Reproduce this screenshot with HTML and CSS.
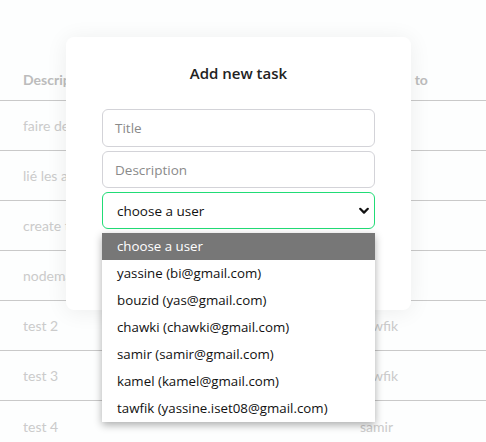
FILE: index.html
```html
<!DOCTYPE html>
<html>
<head>
<meta charset="utf-8">
<link rel="stylesheet" href="styles.css">
</head>
<body>
<div class="page">
  <div class="table">
    <div class="row head"><div class="c1">Description</div><div class="c2">Assigned to</div></div>
    <div class="row"><div class="c1">faire des tests</div><div class="c2">yassine</div></div>
    <div class="row"><div class="c1">lié les apis</div><div class="c2">bouzid</div></div>
    <div class="row"><div class="c1">create task</div><div class="c2">chawki</div></div>
    <div class="row"><div class="c1">nodemailer</div><div class="c2">kamel</div></div>
    <div class="row"><div class="c1">test 2</div><div class="c2">tawfik</div></div>
    <div class="row"><div class="c1">test 3</div><div class="c2">tawfik</div></div>
    <div class="row last"><div class="c1">test 4</div><div class="c2">samir</div></div>
  </div>

  <div class="modal">
    <h2 class="modal-title">Add new task</h2>
    <div class="form">
      <div class="input"><span class="ph">Title</span></div>
      <div class="input"><span class="ph">Description</span></div>
      <div class="select">
        <span>choose a user</span>
        <svg class="chev" width="10" height="8" viewBox="0 0 10 8"><path d="M1.2 1.8 L5 5.6 L8.8 1.8" fill="none" stroke="#111" stroke-width="2.2" stroke-linecap="round" stroke-linejoin="round"/></svg>
      </div>
    </div>
  </div>

  <ul class="options">
    <li class="sel">choose a user</li>
    <li>yassine (bi@gmail.com)</li>
    <li>bouzid (yas@gmail.com)</li>
    <li>chawki (chawki@gmail.com)</li>
    <li>samir (samir@gmail.com)</li>
    <li>kamel (kamel@gmail.com)</li>
    <li>tawfik (yassine.iset08@gmail.com)</li>
  </ul>
</div>
</body>
</html>
```

FILE: styles.css
```css
* { box-sizing: border-box; }
html, body { margin: 0; padding: 0; }
body {
  width: 486px;
  height: 442px;
  overflow: hidden;
  background: #fdfefe;
  font-family: Lato, "Open Sans", sans-serif;
}
.page { position: relative; width: 486px; height: 442px; }

.table { padding-top: 60px; }
.row {
  display: grid;
  grid-template-columns: 360px 1fr;
  height: 50px;
  border-bottom: 1px solid #c9c9c9;
  align-items: center;
  color: #cbcbcb;
  font-size: 14px;
}
.row.head { height: 41px; font-weight: 700; color: #bcbcbc; padding-bottom: 1px; grid-template-columns: 355px 1fr; }
.row.last { border-bottom: none; }
.c1 { padding-left: 23px; white-space: nowrap; }
.c2 { white-space: nowrap; }

.modal {
  position: absolute;
  left: 66px;
  top: 37px;
  width: 345px;
  height: 273px;
  background: #fff;
  border-radius: 8px;
  box-shadow: 0 2px 22px rgba(0,0,0,0.07);
  padding: 22px 36px 0 36px;
  font-family: "Open Sans", "Noto Sans", sans-serif;
}
.modal-title {
  margin: 0 0 22px 0;
  text-align: center;
  font-size: 15px;
  font-weight: 600;
  color: #222;
  line-height: 28px;
}
.form { display: flex; flex-direction: column; gap: 4px; }
.input {
  height: 37px;
  border: 1px solid #d3d3d8;
  border-radius: 6px;
  display: flex;
  align-items: center;
  padding-left: 12px;
  font-size: 13.5px;
}
.input:first-child { height: 38px; }
.ph { color: #8a8a8a; }
.select {
  height: 37px;
  border: 1.5px solid #21dc76;
  border-radius: 6px;
  display: flex;
  align-items: center;
  justify-content: space-between;
  padding: 0 5px 0 14px;
  font-size: 13.5px;
  color: #111;
}

.options {
  position: absolute;
  left: 102px;
  top: 233px;
  width: 273px;
  margin: 0;
  padding: 0;
  list-style: none;
  background: #fff;
  box-shadow: 0 3px 8px rgba(0,0,0,0.32);
  font-family: "Open Sans", "Noto Sans", sans-serif;
  font-size: 13.3px;
  color: #111;
}
.options li {
  height: 27px;
  line-height: 27px;
  padding-left: 15px;
  white-space: nowrap;
}
.options li.sel { background: #777; color: #fff; }
```
